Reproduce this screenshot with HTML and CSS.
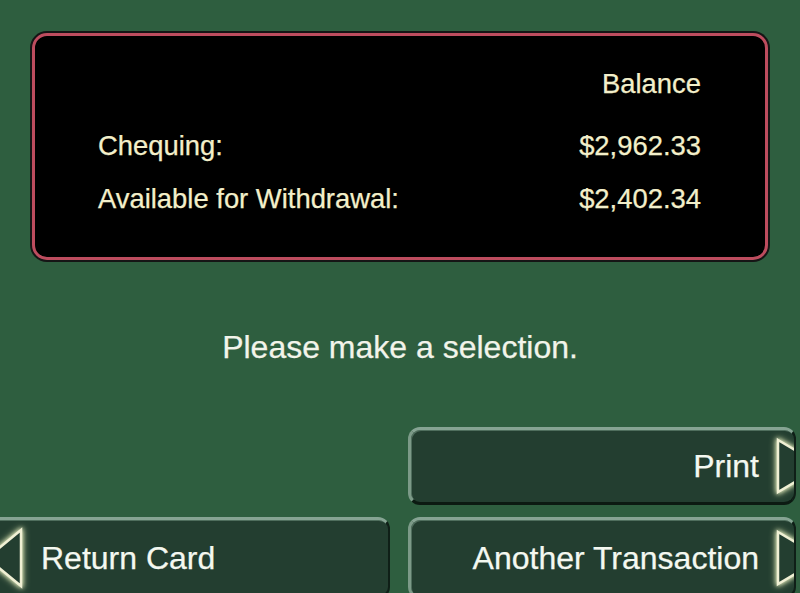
FILE: index.html
```html
<!DOCTYPE html>
<html>
<head>
<meta charset="utf-8">
<link rel="stylesheet" href="styles.css">
</head>
<body>
<div class="screen">
  <div class="panel">
    <div class="head">Balance</div>
    <div class="row first"><span>Chequing:</span><span>$2,962.33</span></div>
    <div class="row second"><span>Available for Withdrawal:</span><span>$2,402.34</span></div>
  </div>
  <div class="message">Please make a selection.</div>
  <div class="buttons">
    <div class="btn right print">
      <span class="label">Print</span>
      <svg class="arrow-r" width="54" height="60" viewBox="0 0 54 60"><polygon points="3,4 47,30 3,56"/></svg>
    </div>
    <div class="btn left ret">
      <svg class="arrow-l" width="40" height="62" viewBox="0 0 40 62"><polygon points="37,3 3,31 37,59"/></svg>
      <span class="label">Return Card</span>
    </div>
    <div class="btn right another">
      <span class="label">Another Transaction</span>
      <svg class="arrow-r" width="54" height="60" viewBox="0 0 54 60"><polygon points="3,4 47,30 3,56"/></svg>
    </div>
  </div>
</div>
</body>
</html>
```
FILE: styles.css
```css
html, body {
  margin: 0;
  padding: 0;
  background: #2e5e3f;
}
.screen {
  width: 800px;
  height: 593px;
  overflow: hidden;
  background: #2e5e3f;
  font-family: "Liberation Sans", Arial, sans-serif;
  display: flex;
  flex-direction: column;
  -webkit-text-stroke: 0.25px currentColor;
}
.panel {
  box-sizing: border-box;
  margin: 33px 0 0 32px;
  width: 736px;
  height: 227px;
  border: 3px solid #bd4c5e;
  border-radius: 15px;
  background: #000;
  box-shadow: 0 0 0 2px #151515;
  padding: 32px 64px 0 63px;
  color: #f3efca;
  font-size: 27.4px;
  line-height: 32px;
  flex-shrink: 0;
}
.head {
  text-align: right;
}
.row {
  display: flex;
  justify-content: space-between;
}
.row.first {
  margin-top: 30px;
}
.row.second {
  margin-top: 21px;
}
.message {
  margin-top: 67px;
  text-align: center;
  font-size: 32px;
  line-height: 40px;
  color: #f2f4ea;
  flex-shrink: 0;
}
.buttons {
  margin-top: 60px;
  margin-left: -20px;
  display: grid;
  grid-template-columns: 410px 388px;
  grid-template-rows: 78px 82px;
  column-gap: 18px;
  row-gap: 12px;
  flex-shrink: 0;
}
.btn {
  box-sizing: border-box;
  background: #233e30;
  border-radius: 12px;
  border-top: 3px solid #86a493;
  border-left: 3px solid #7c9a88;
  border-right: 2px solid #0f1f17;
  border-bottom: 3px solid #0c1a12;
  box-shadow: inset 1px 1px 0 #4f6e5d;
  display: flex;
  align-items: center;
  overflow: hidden;
  color: #f4f8f0;
  font-size: 32px;
  line-height: 40px;
}
.btn.print {
  grid-column: 2;
  grid-row: 1;
}
.btn.ret {
  grid-column: 1;
  grid-row: 2;
}
.btn.another {
  grid-column: 2;
  grid-row: 2;
}
.btn.right {
  justify-content: flex-end;
}
.btn.left {
  justify-content: flex-start;
}
.arrow-r, .arrow-l {
  flex-shrink: 0;
  overflow: visible;
}
.arrow-r polygon, .arrow-l polygon {
  fill: #233e30;
  stroke: #f0f0d4;
  stroke-width: 2.5;
  filter: drop-shadow(0 0 2px #dfe6bd) drop-shadow(0 0 3px #b9c898);
}
.arrow-r {
  margin-left: 16px;
  margin-right: -35px;
}
.arrow-l {
  margin-left: 1px;
  margin-right: 17px;
}
```
